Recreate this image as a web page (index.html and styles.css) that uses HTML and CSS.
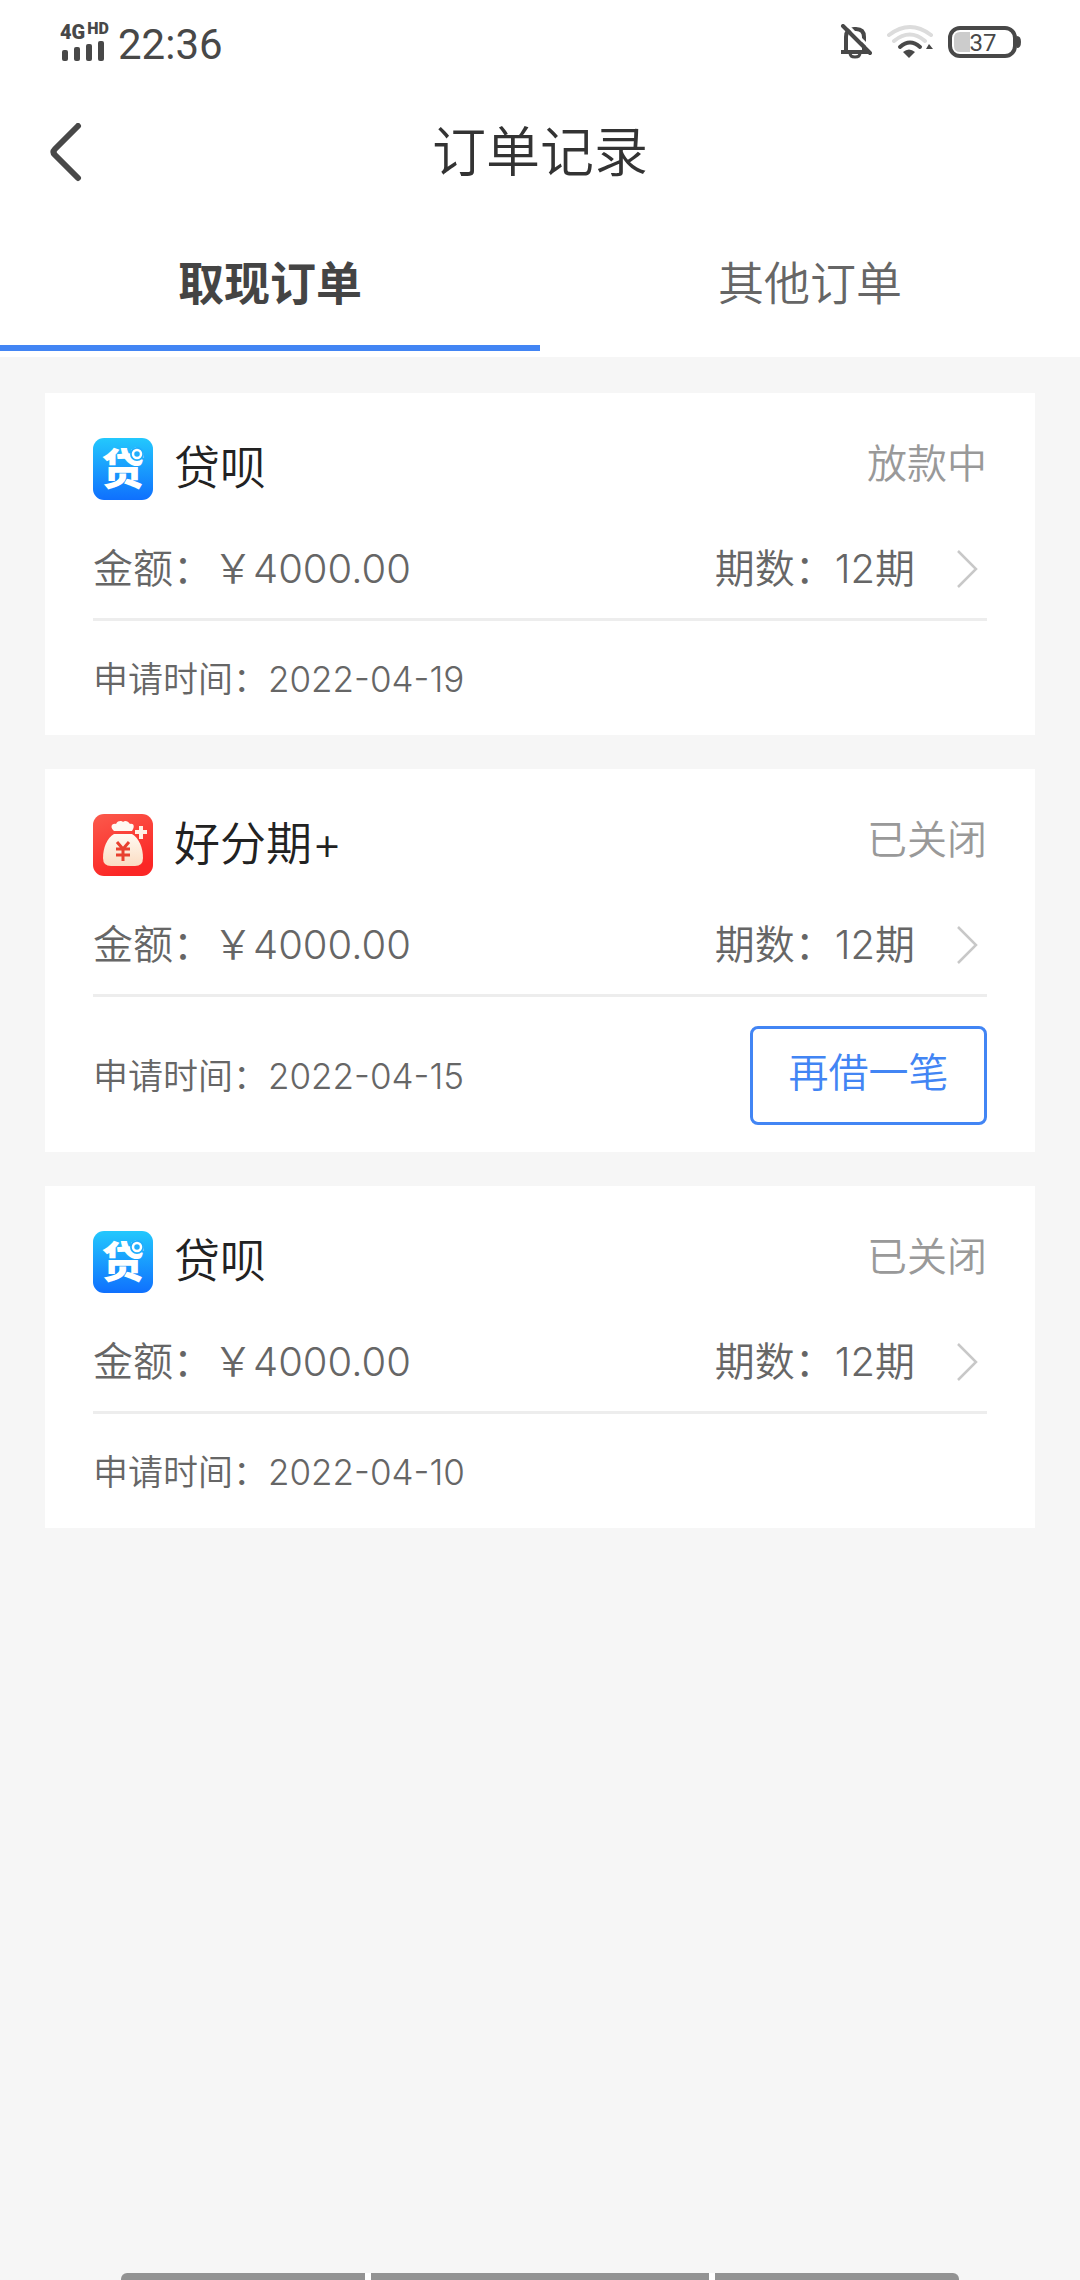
FILE: index.html
```html
<!DOCTYPE html>
<html lang="zh-CN">
<head>
<meta charset="utf-8">
<meta name="viewport" content="width=device-width, initial-scale=1">
<title>订单记录</title>
<link rel="stylesheet" href="styles.css">
</head>
<body>
<svg class="defs" aria-hidden="true">
  <defs>
    <linearGradient id="blue" x1="0" y1="0" x2="0" y2="1"><stop offset="0" stop-color="#23c8fd"/><stop offset="1" stop-color="#0f70fe"/></linearGradient>
    <linearGradient id="red" x1="0" y1="0" x2="0.4" y2="1"><stop offset="0" stop-color="#fb5a4c"/><stop offset="1" stop-color="#fb2625"/></linearGradient>
    <linearGradient id="cream" x1="0" y1="0" x2="0" y2="1"><stop offset="0" stop-color="#fffaf2"/><stop offset="1" stop-color="#fbdcc2"/></linearGradient>
    <symbol id="logo-dai" viewBox="0 0 60 62">
      <rect width="60" height="62" rx="11" fill="url(#blue)"/>
      <text class="logo-text" x="30" y="47" text-anchor="middle">贷</text>
      <circle cx="44" cy="16" r="7" fill="#20aefd"/>
      <circle cx="44" cy="16" r="4" fill="none" stroke="#fff" stroke-width="2.5"/>
    </symbol>
    <symbol id="logo-bag" viewBox="0 0 60 62">
      <rect width="60" height="62" rx="11" fill="url(#red)"/>
      <path d="M21 17C17 14 18 9 23 10C25 6 29 7 30 8C32 6 35 7 37 10C41 9 42 13 39 17Z" fill="#fff9f2"/>
      <path d="M21 20H39C46 24 50 34 50 44Q50 52 42 52H18Q10 52 10 44C10 34 14 24 21 20Z" fill="url(#cream)"/>
      <path d="M24 28L30 35L36 28M30 35V47M23 35H37M23 41H37" fill="none" stroke="#e8402f" stroke-width="3"/>
      <path d="M48 12V25M42 18H54" fill="none" stroke="#fff1e6" stroke-width="4"/>
    </symbol>
    <symbol id="chevron" viewBox="0 0 24 40"><path d="M3 2L21 20L3 38" fill="none" stroke="#c8c8c8" stroke-width="2.5"/></symbol>
  </defs>
</svg>
<div class="top">
  <div class="statusbar">
    <div class="signal">
      <div class="network"><b>4G</b><b class="hd">HD</b></div>
      <svg width="46" height="20" viewBox="0 0 46 20" fill="#484848"><rect x="2" y="9" width="6" height="11" rx="2"/><rect x="14" y="6" width="6" height="14" rx="2"/><rect x="26" y="3" width="6" height="17" rx="2"/><rect x="38" y="0" width="6" height="20" rx="2"/></svg>
    </div>
    <time class="clock">22:36</time>
    <div class="indicators">
      <svg width="32" height="36" viewBox="0 0 32 36" fill="none" stroke="#484848" stroke-width="4"><path d="M6 28V13Q6 5 14 5H16Q24 5 24 13V28M1 28H29"/><path d="M10 29Q10 33 15 33Q20 33 20 29" stroke-width="3"/><path d="M6 0L33 27" stroke="#fff" stroke-width="3"/><path d="M3 2L30 29" stroke-linecap="round"/></svg>
      <svg width="48" height="36" viewBox="0 0 48 36" fill="none" stroke-width="4" stroke-linecap="round"><path d="M3 11Q24 -5 45 11M8 17Q24 4 39 17" stroke="#dcdcdc"/><path d="M14 23Q24 14 34 23" stroke="#484848"/><path d="M17 28Q23 23 29 28L23 34Z" fill="#484848"/><path d="M40 25H47L43 20Z" fill="#484848"/></svg>
      <svg width="74" height="32" viewBox="0 0 74 32"><rect x="2" y="2" width="65" height="28" rx="10" fill="none" stroke="#484848" stroke-width="4"/><path d="M69 10Q73 10 73 16Q73 22 69 22Z" fill="#484848"/><path d="M12 6H22V26H12Q6 26 6 20V12Q6 6 12 6Z" fill="#ccc"/><text class="battery-text" x="35" y="25" text-anchor="middle">37</text></svg>
    </div>
  </div>
  <header class="header">
    <button class="back" type="button" aria-label="返回"><svg width="32" height="60" viewBox="0 0 32 60"><path d="M28 3L5 26Q2 29 5 32L28 55" fill="none" stroke="#484848" stroke-width="6" stroke-linecap="round"/></svg></button>
    <h1 class="title">订单记录</h1>
  </header>
  <nav class="tabs">
    <button class="tab tab-active" type="button">取现订单</button>
    <button class="tab" type="button">其他订单</button>
  </nav>
</div>
<main class="orders">
  <article class="card">
    <div class="card-head"><svg class="logo"><use href="#logo-dai"/></svg><h2 class="name">贷呗</h2><span class="state">放款中</span></div>
    <a class="detail" href="#order1"><span>金额：￥4000.00</span><span class="term">期数：12期</span><svg class="arrow"><use href="#chevron"/></svg></a>
    <div class="card-foot"><span>申请时间：2022-04-19</span></div>
  </article>
  <article class="card">
    <div class="card-head"><svg class="logo"><use href="#logo-bag"/></svg><h2 class="name">好分期+</h2><span class="state">已关闭</span></div>
    <a class="detail" href="#order2"><span>金额：￥4000.00</span><span class="term">期数：12期</span><svg class="arrow"><use href="#chevron"/></svg></a>
    <div class="card-foot"><span>申请时间：2022-04-15</span><button class="again" type="button">再借一笔</button></div>
  </article>
  <article class="card">
    <div class="card-head"><svg class="logo"><use href="#logo-dai"/></svg><h2 class="name">贷呗</h2><span class="state">已关闭</span></div>
    <a class="detail" href="#order3"><span>金额：￥4000.00</span><span class="term">期数：12期</span><svg class="arrow"><use href="#chevron"/></svg></a>
    <div class="card-foot"><span>申请时间：2022-04-10</span></div>
  </article>
</main>
<div class="gesture"><i></i><i class="mid"></i><i></i></div>
</body>
</html>
```
FILE: styles.css
```css
* { box-sizing: border-box; }
body {
  margin: 0;
  min-height: 100vh;
  display: flex;
  flex-direction: column;
  background: #f6f6f6;
  color: #666;
  font-family: Inter, "Noto Sans CJK SC", sans-serif;
  font-weight: 350;
}
button { border: 0; padding: 0; background: none; font: inherit; color: inherit; }
svg { display: block; flex: none; }
.defs { position: absolute; width: 0; height: 0; }
.top { background: #fff; padding-bottom: 6px; }

.statusbar { display: flex; align-items: center; height: 84px; padding: 0 58px 0 60px; color: #484848; }
.signal { width: 48px; margin-right: 10px; }
.network { display: flex; align-items: flex-start; gap: 2px; height: 18px; font: 700 20px/18px Roboto, sans-serif; }
.hd { font-size: 16px; line-height: 12px; }
.clock { font: 400 42px/48px Roboto, sans-serif; padding-top: 6px; }
.indicators { display: flex; align-items: center; gap: 14px; margin-left: auto; }
.battery-text { font: 400 24px Roboto, sans-serif; fill: #484848; }

.header { display: grid; grid-template-columns: 60px 1fr 60px; align-items: center; height: 138px; padding: 0 50px; }
.title { margin: 0; text-align: center; font-size: 54px; line-height: 80px; font-weight: 350; color: #333; }

.tabs { display: flex; }
.tab { flex: 1; height: 129px; padding-bottom: 2px; border-bottom: 6px solid transparent; font-size: 46px; line-height: 68px; }
.tab-active { border-color: #4285f4; color: #444; font-weight: 700; }

.orders { display: flex; flex-direction: column; gap: 34px; padding: 36px 45px; }
.card { background: #fff; padding: 45px 48px 0; }
.card-head { display: flex; align-items: center; height: 62px; }
.logo { width: 60px; height: 62px; }
.logo-text { font: 900 43px "Noto Sans CJK SC", sans-serif; fill: #fff; }
.name { margin: 0 0 0 21px; padding-bottom: 4px; font-size: 46px; line-height: 62px; font-weight: 350; color: #222; }
.state { margin-left: auto; padding-bottom: 10px; font-size: 40px; line-height: 54px; color: #999; }
.detail { display: flex; align-items: center; height: 121px; padding: 20px 8px 0 0; border-bottom: 3px solid #ededed; font-size: 40px; line-height: 60px; color: inherit; text-decoration: none; }
.term { margin-left: auto; }
.arrow { width: 24px; height: 40px; margin-left: 40px; }
.card-foot { display: flex; align-items: center; justify-content: space-between; min-height: 114px; padding: 29px 0 27px; font-size: 35px; line-height: 50px; }
.again { width: 237px; height: 99px; padding-bottom: 6px; border: 3px solid #4285f4; border-radius: 8px; font-size: 40px; color: #4285f4; }

.gesture { display: flex; gap: 6px; margin: auto 121px 0; background: #fff; border-radius: 6px 6px 0 0; overflow: hidden; }
.gesture i { flex: 244; height: 7px; background: #939393; }
.gesture .mid { flex: 338; }
```
